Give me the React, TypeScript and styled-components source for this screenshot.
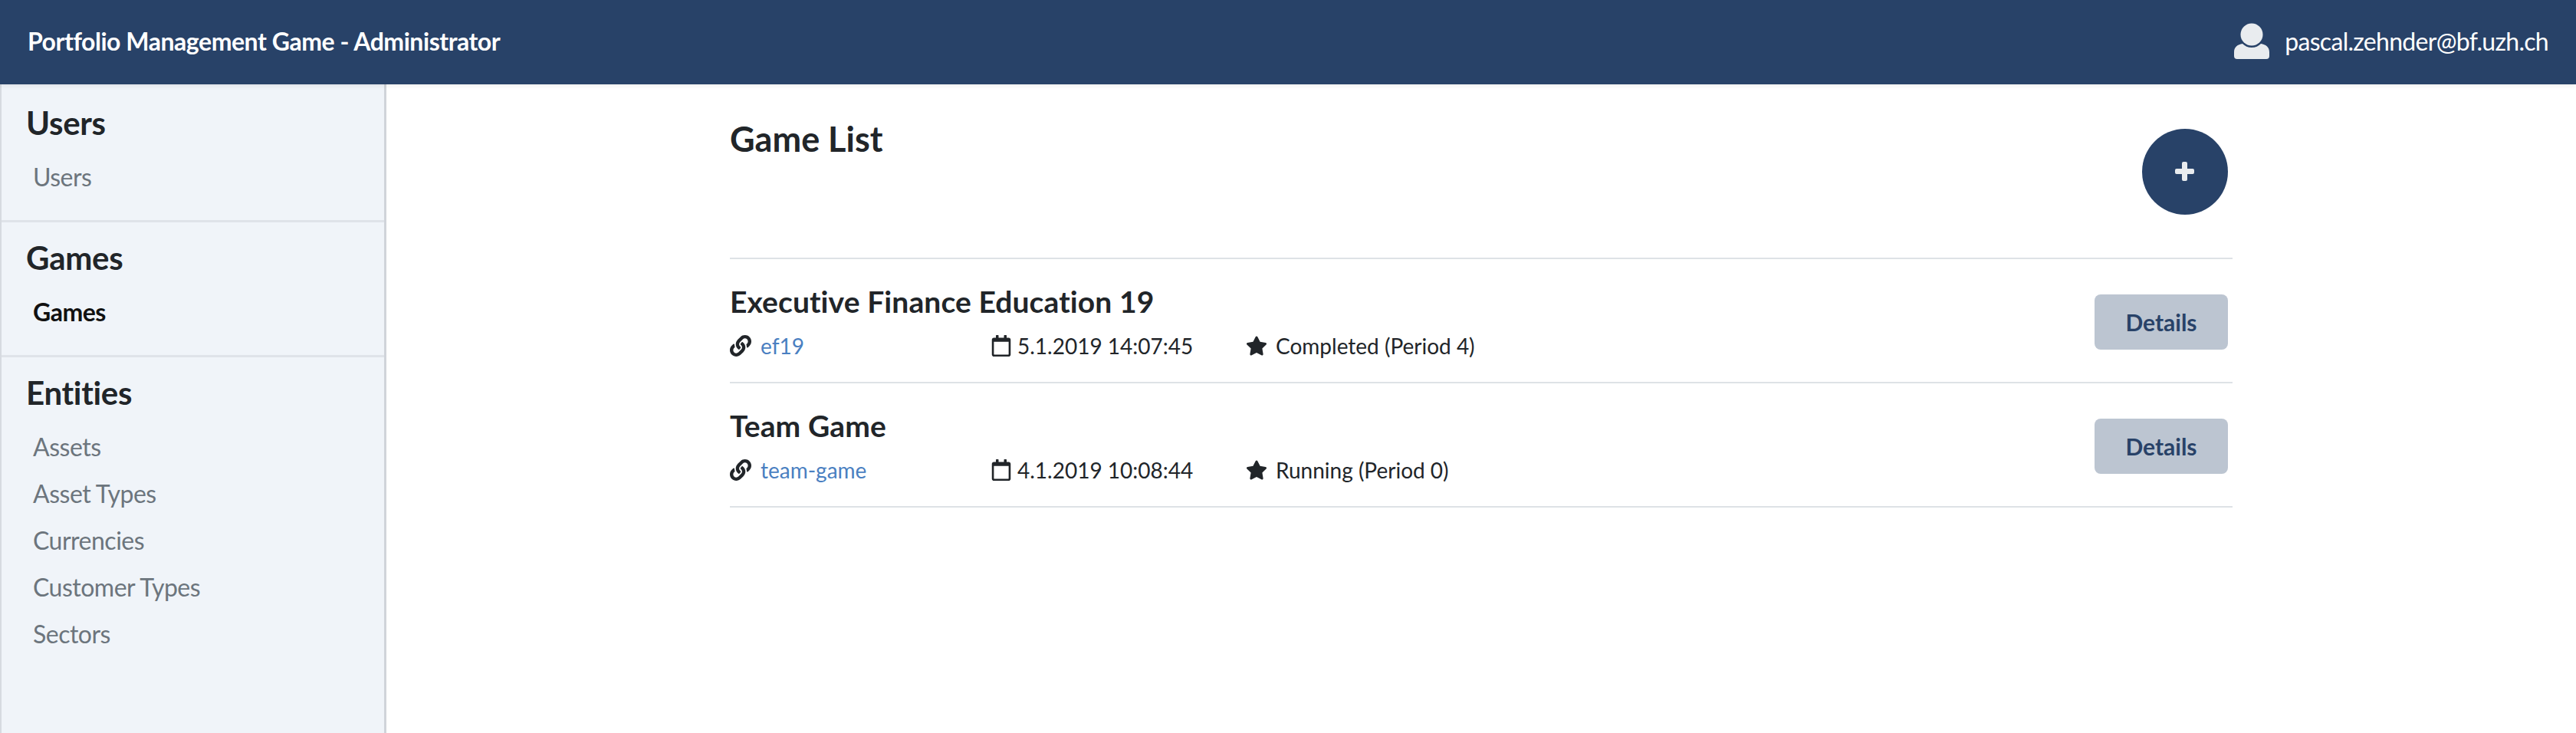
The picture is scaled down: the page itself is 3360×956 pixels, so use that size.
import React from "react";
import styled, { createGlobalStyle } from "styled-components";
import { FaLink, FaRegCalendar, FaStar } from "react-icons/fa";

const Global = createGlobalStyle`
  html, body { margin: 0; padding: 0; background: #fff; }
  body { font-family: Lato, "Liberation Sans", sans-serif; color: #212529; }
  * { box-sizing: border-box; }
`;

const Page = styled.div`
  height: 956px;
  display: flex;
  flex-direction: column;
  overflow: hidden;
`;

const Header = styled.header`
  height: 110px;
  flex: none;
  background: #284268;
  color: #fff;
  display: flex;
  align-items: center;
  justify-content: space-between;
  padding: 0 36px 4px;
  box-shadow: 0 2px 6px rgba(0, 0, 0, 0.08);
  position: relative;
`;

const Brand = styled.div`
  font-size: 32px;
  font-weight: 700;
  letter-spacing: -0.46px;
`;

const Account = styled.div`
  display: flex;
  align-items: center;
  gap: 20px;
  font-size: 32px;
  letter-spacing: -0.7px;
`;

const UserGlyph = styled.svg`
  width: 46px;
  height: 47px;
  fill: #e9ecef;
`;

const Body = styled.div`
  flex: 1;
  display: flex;
  min-height: 0;
`;

const Sidebar = styled.nav`
  width: 504px;
  flex: none;
  padding-top: 4px;
  background: #f0f4f9;
  border-left: 2px solid #d6dae0;
  border-right: 3px solid #d0d4da;
`;

const Section = styled.section`
  padding: 16px 0 0 32px;
  height: 176px;
  border-bottom: 3px solid #dfe3e9;
  &:last-child { border-bottom: none; height: auto; }
`;

const SectionTitle = styled.h2`
  margin: 0 0 10px;
  font-size: 42px;
  line-height: 60px;
  font-weight: 700;
  letter-spacing: -0.3px;
  color: #212529;
`;

const NavItem = styled.a<{ $active?: boolean }>`
  display: block;
  padding-left: 9px;
  font-size: 32px;
  line-height: 61px;
  letter-spacing: -0.5px;
  font-weight: ${(p) => (p.$active ? 700 : 400)};
  color: ${(p) => (p.$active ? "#111" : "#6c757d")};
`;

const Main = styled.main`
  flex: 1;
  display: flex;
  justify-content: center;
`;

const Content = styled.div`
  width: 1960px;
`;

const TitleBar = styled.div`
  height: 228px;
  padding: 35px 6px 0 0;
  display: flex;
  justify-content: space-between;
  align-items: flex-start;
  border-bottom: 2px solid #dee2e6;
`;

const Title = styled.h1`
  margin: 0;
  font-size: 45px;
  line-height: 72px;
  font-weight: 700;
`;

const AddButton = styled.button`
  width: 112px;
  height: 112px;
  margin-top: 23px;
  padding: 0 2px 1px 0;
  border: none;
  border-radius: 50%;
  background: #284268;
  display: flex;
  align-items: center;
  justify-content: center;
`;

const PlusGlyph = styled.svg`
  width: 25px;
  height: 25px;
  fill: #e9ecef;
`;

const GameRow = styled.div`
  height: 162px;
  padding-right: 6px;
  display: flex;
  align-items: center;
  justify-content: space-between;
  border-bottom: 2px solid #dee2e6;
`;

const GameInfo = styled.div``;

const GameName = styled.h3`
  margin: 0 0 6px;
  font-size: 39px;
  line-height: 60px;
  font-weight: 700;
  letter-spacing: 0.1px;
`;

const Meta = styled.div`
  display: flex;
  font-size: 28px;
  line-height: 45px;
`;

const MetaItem = styled.div<{ $width: number; $gap: number }>`
  width: ${(p) => p.$width}px;
  display: flex;
  align-items: center;
  gap: ${(p) => p.$gap}px;
  svg { height: 28px; width: auto; flex: none; }
`;

const GameLink = styled.a`
  color: #4a7fc1;
`;

const DetailsButton = styled.button`
  width: 174px;
  height: 72px;
  margin-top: 4px;
  border: none;
  border-radius: 8px;
  background: #bcc5d1;
  color: #284268;
  font: 700 30px Lato, "Liberation Sans", sans-serif;
`;

const games = [
  { name: "Executive Finance Education 19", slug: "ef19", date: "5.1.2019 14:07:45", status: "Completed (Period 4)" },
  { name: "Team Game", slug: "team-game", date: "4.1.2019 10:08:44", status: "Running (Period 0)" },
];

const nav = [
  { title: "Users", items: ["Users"] },
  { title: "Games", items: ["Games"], active: "Games" },
  { title: "Entities", items: ["Assets", "Asset Types", "Currencies", "Customer Types", "Sectors"] },
];

export default function App() {
  return (
    <Page>
      <Global />
      <Header>
        <Brand>Portfolio Management Game - Administrator</Brand>
        <Account>
          <UserGlyph viewBox="0 0 46 47">
            <circle cx="23" cy="15" r="14.5" />
            <path d="M0 43V38C0 31 5 28 11 27C14 30 18 32 23 32C28 32 32 30 35 27C41 28 46 31 46 38V43A4 4 0 0 1 42 47H4A4 4 0 0 1 0 43Z" />
          </UserGlyph>
          pascal.zehnder@bf.uzh.ch
        </Account>
      </Header>
      <Body>
        <Sidebar>
          {nav.map((s) => (
            <Section key={s.title}>
              <SectionTitle>{s.title}</SectionTitle>
              {s.items.map((i) => (
                <NavItem key={i} $active={s.active === i}>{i}</NavItem>
              ))}
            </Section>
          ))}
        </Sidebar>
        <Main>
          <Content>
            <TitleBar>
              <Title>Game List</Title>
              <AddButton aria-label="Add game">
                <PlusGlyph viewBox="0 0 25 25">
                  <path d="M11 0H14A2 2 0 0 1 16 2V9H23A2 2 0 0 1 25 11V14A2 2 0 0 1 23 16H16V23A2 2 0 0 1 14 25H11A2 2 0 0 1 9 23V16H2A2 2 0 0 1 0 14V11A2 2 0 0 1 2 9H9V2A2 2 0 0 1 11 0Z" />
                </PlusGlyph>
              </AddButton>
            </TitleBar>
            {games.map((g) => (
              <GameRow key={g.slug}>
                <GameInfo>
                  <GameName>{g.name}</GameName>
                  <Meta>
                    <MetaItem $width={340} $gap={12}><FaLink /><GameLink>{g.slug}</GameLink></MetaItem>
                    <MetaItem $width={333} $gap={7}><FaRegCalendar />{g.date}</MetaItem>
                    <MetaItem $width={400} $gap={11}><FaStar />{g.status}</MetaItem>
                  </Meta>
                </GameInfo>
                <DetailsButton>Details</DetailsButton>
              </GameRow>
            ))}
          </Content>
        </Main>
      </Body>
    </Page>
  );
}
